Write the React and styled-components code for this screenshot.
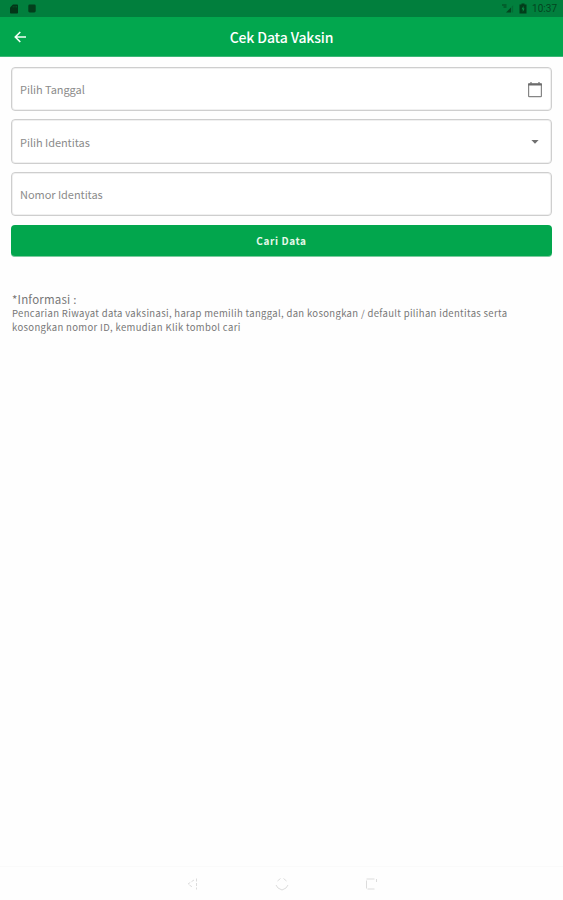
import React from "react";
import styled, { createGlobalStyle } from "styled-components";

const GlobalStyle = createGlobalStyle`
  * {
    box-sizing: border-box;
  }

  body {
    margin: 0;
    background: #fefefe;
    font-family: "Noto Sans CJK SC", "Open Sans", sans-serif;
  }
`;

const Screen = styled.div`
  display: flex;
  flex-direction: column;
  height: 900px;
  overflow: hidden;
`;

const StatusBar = styled.div`
  display: flex;
  justify-content: space-between;
  align-items: center;
  height: 17px;
  padding: 0 6px 0 9px;
  background: #017f3d;
  color: #04451f;
`;

const StatusGroup = styled.div`
  display: flex;
  align-items: center;
  gap: ${(props) => props.$gap}px;
`;

const Clock = styled.span`
  font-family: Roboto, sans-serif;
  font-size: 10px;
  line-height: 12px;
  padding-top: 1px;
`;

const Header = styled.header`
  display: grid;
  grid-template-columns: 40px 1fr 40px;
  align-items: center;
  height: 40px;
  background: #02a74e;
  border-bottom: 1px solid #3cb777;
  color: #fff;
`;

const BackButton = styled.button`
  display: flex;
  justify-content: center;
  padding: 0;
  border: 0;
  background: none;
  color: #f4fff6;
`;

const Title = styled.h1`
  margin: 0;
  font-size: 14px;
  font-weight: 500;
  line-height: 20px;
  text-align: center;
  letter-spacing: -0.13px;
`;

const Form = styled.main`
  display: flex;
  flex-direction: column;
  flex: 1;
  padding: 10px 11px 0;
`;

const Field = styled.div`
  display: flex;
  justify-content: space-between;
  align-items: center;
  height: ${(props) => props.$height}px;
  margin-bottom: ${(props) => props.$space}px;
  padding: 0 8px 0 8px;
  border: 1px solid #cecece;
  border-radius: 4px;
  background: #fff;
  box-shadow: inset 0 0 0 1px #f0f0f0;
`;

const Label = styled.span`
  color: #8b8b8b;
  font-size: 11px;
  line-height: 16px;
  letter-spacing: -0.05px;
`;

const SearchButton = styled.button`
  height: 32px;
  padding: 0;
  border: 0;
  border-bottom: 1px solid #7ccb9f;
  border-radius: 4px;
  background: #02a64d;
  color: #e6f8e9;
  font-family: inherit;
  font-size: 10px;
  font-weight: 700;
  letter-spacing: 0.6px;
`;

const Info = styled.section`
  margin: 35px 0 0 1px;
  color: #777;
`;

const InfoTitle = styled.div`
  font-size: 11.5px;
  line-height: 15px;
  letter-spacing: 0.2px;
`;

const InfoLine = styled.div`
  font-size: 9.5px;
  line-height: 13.5px;
  letter-spacing: ${(props) => props.$spacing}px;
  white-space: nowrap;
`;

const NavBar = styled.nav`
  display: flex;
  justify-content: center;
  align-items: center;
  gap: 75px;
  height: 34px;
  border-top: 1px solid #fafafa;
  color: #dcdcdc;
`;

function CardIcon() {
  return (
    <svg width="10" height="10" viewBox="0 0 10 10">
      <path d="M4 0.5h4.2q.8 0 .8.8v7.4q0 .8-.8.8H1.8q-.8 0-.8-.8V3.5z" fill="#033618" />
      <path d="M4.2 2v1.5M6 2v1.5M7.6 2v1.5" stroke="#03602d" strokeWidth=".7" />
    </svg>
  );
}

function SquareIcon() {
  return (
    <svg width="8" height="9" viewBox="0 0 8 9">
      <rect x="0.3" y="0.5" width="7.4" height="8" rx="1.4" fill="#033f1c" />
    </svg>
  );
}

function SignalIcon() {
  return (
    <svg width="13" height="11" viewBox="0 0 13 11">
      <path d="M1 2h4.500M2.500 4h3" stroke="currentColor" strokeWidth="1.2" />
      <path d="M5 9.500l5-5v5z" fill="currentColor" />
      <path d="M10.600 3.700l1.500-1.500v7.300h-1.500z" fill="#046a34" />
    </svg>
  );
}

function BatteryIcon() {
  return (
    <svg width="8" height="11" viewBox="0 0 8 11">
      <path d="M2.5 0.5h3v1h2v9h-7v-9h2z" fill="#023d1a" />
      <path d="M4.500 3L2.600 6.300h1.200V9l1.800-3.500H4.500z" fill="#049044" />
    </svg>
  );
}

function ArrowIcon() {
  return (
    <svg width="14" height="14" viewBox="0 0 14 14" fill="none">
      <path d="M13 7H2.400M7.300 2l-5 5 5 5" stroke="currentColor" strokeWidth="1.6" />
    </svg>
  );
}

function CalendarIcon() {
  return (
    <svg width="16" height="17" viewBox="0 0 16 17" fill="none">
      <rect x="1.6" y="2.9" width="12.8" height="12.8" rx=".6" stroke="#858585" strokeWidth="1.2" />
      <path d="M1.2 3.5h13.6" stroke="#6b6b6b" strokeWidth="2" />
      <path d="M4 1v2M12 1v2" stroke="#777" strokeWidth="1.3" />
    </svg>
  );
}

function CaretIcon() {
  return (
    <svg width="16" height="6" viewBox="0 0 16 6">
      <path d="M4.4 1h7.2L8 4.7z" fill="#707070" />
    </svg>
  );
}

function NavIcon({ children }) {
  return (
    <svg width="14" height="14" viewBox="0 0 14 14" fill="none" stroke="currentColor">
      {children}
    </svg>
  );
}

function App() {
  return (
    <>
      <GlobalStyle />
      <Screen>
        <StatusBar>
          <StatusGroup $gap={9}>
            <CardIcon />
            <SquareIcon />
          </StatusGroup>
          <StatusGroup $gap={5}>
            <SignalIcon />
            <BatteryIcon />
            <Clock>10:37</Clock>
          </StatusGroup>
        </StatusBar>
        <Header>
          <BackButton aria-label="Kembali">
            <ArrowIcon />
          </BackButton>
          <Title>Cek Data Vaksin</Title>
        </Header>
        <Form>
          <Field $height={44} $space={8}>
            <Label>Pilih Tanggal</Label>
            <CalendarIcon />
          </Field>
          <Field $height={45} $space={8}>
            <Label>Pilih Identitas</Label>
            <CaretIcon />
          </Field>
          <Field $height={44} $space={9}>
            <Label>Nomor Identitas</Label>
          </Field>
          <SearchButton>Cari Data</SearchButton>
          <Info>
            <InfoTitle>*Informasi :</InfoTitle>
            <InfoLine $spacing={0.335}>
              Pencarian Riwayat data vaksinasi, harap memilih tanggal, dan kosongkan / default pilihan identitas serta
            </InfoLine>
            <InfoLine $spacing={0.35}>kosongkan nomor ID, kemudian Klik tombol cari</InfoLine>
          </Info>
        </Form>
        <NavBar>
          <NavIcon>
            <path d="M10.500 1.500v11M8 3L2 7l5 3.500" strokeDasharray="3 1.5" />
          </NavIcon>
          <NavIcon>
            <path d="M2.500 4L5.500 1.500M8.500 1.500l3 2.500M1 8l2 3 4 2 4-2 2-3" />
          </NavIcon>
          <NavIcon>
            <path d="M12.500 5V2M10.500 2H2.500v10h8" strokeDasharray="8 1.5" />
          </NavIcon>
        </NavBar>
      </Screen>
    </>
  );
}

export default App;
